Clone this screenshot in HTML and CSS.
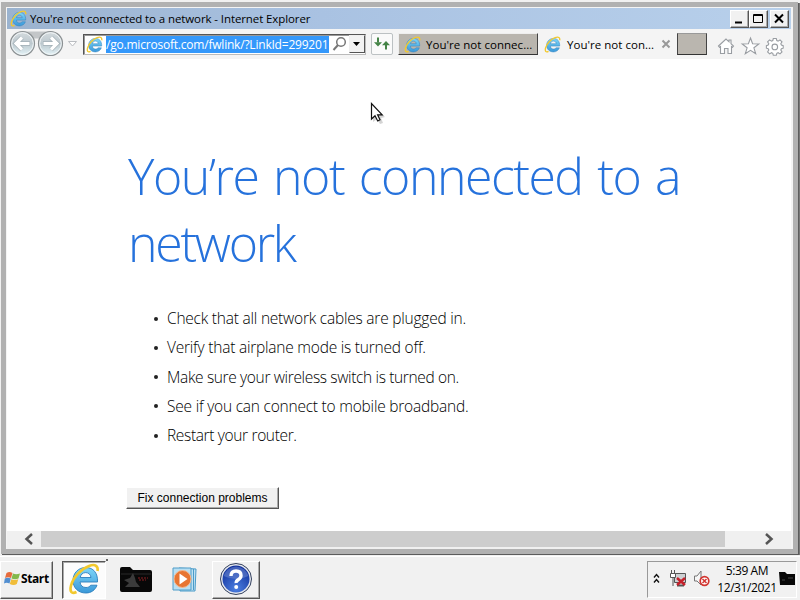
FILE: index.html
```html
<!DOCTYPE html>
<html lang="en">
<head>
<meta charset="utf-8">
<title>You're not connected to a network</title>
<link rel="stylesheet" href="styles.css">
</head>
<body>
<svg class="defs" width="0" height="0" aria-hidden="true">
  <defs>
    <linearGradient id="eg" x1="0" y1="0" x2="0" y2="1"><stop offset="0" stop-color="#7ed6f8"/><stop offset="1" stop-color="#3a98d8"/></linearGradient>
    <linearGradient id="ng" x1="0" y1="0" x2="0" y2="1"><stop offset="0" stop-color="#d5dbde"/><stop offset=".5" stop-color="#bcc8ce"/><stop offset="1" stop-color="#e4f4f8"/></linearGradient>
    <radialGradient id="hg" cx=".5" cy=".85" r=".8"><stop offset="0" stop-color="#4c7fe0"/><stop offset="1" stop-color="#10309c"/></radialGradient>
    <symbol id="ie" viewBox="0 0 32 32">
      <path d="M29.500 19H12C12.500 22.700 14.500 24.500 18 24.500C20.200 24.500 21.700 23.700 22.700 22.200H29C27.200 27.200 23 30 17.800 30C10.400 30 5 25 5 17.500C5 10 10.400 4.500 17.800 4.500C25.300 4.500 30 10 29.500 19ZM12.200 14.500H23C22.600 11.500 20.700 9.600 17.700 9.600C14.600 9.600 12.800 11.500 12.200 14.500Z" fill="url(#eg)" stroke="#2b7fbd" stroke-width=".9"/>
      <path d="M29.500 8C30.500 3.500 27.500 .5 21 3C13 6 5 14.500 3 22.500C1.500 28.500 3.500 31.500 8.500 29" fill="none" stroke="#f2c92e" stroke-width="2.600"/>
    </symbol>
  </defs>
</svg>
<main class="window">
  <header class="titlebar">
    <svg class="ie-icon"><use href="#ie"/></svg>
    <h2 class="title">You're not connected to a network - Internet Explorer</h2>
    <div class="controls">
      <button aria-label="Minimize"><svg width="16" height="15"><path d="M4 11.500h7" stroke="#000" stroke-width="2"/></svg></button>
      <button aria-label="Maximize"><svg width="16" height="15"><path d="M3.500 3.500h9v8h-9zM3 4.500h10" fill="none" stroke="#000"/></svg></button>
      <button class="close" aria-label="Close"><svg width="16" height="15"><path d="M4 3.500l8 8M12 3.500l-8 8" stroke="#000" stroke-width="2"/></svg></button>
    </div>
  </header>
  <nav class="toolbar">
    <svg class="nav-buttons" width="72" height="30" viewBox="0 0 72 30">
      <path d="M15 2.500h28v7H15z" fill="#c3c6c8"/>
      <g stroke="#8c9193" stroke-width="1.200"><circle cx="15.500" cy="14.500" r="12" fill="url(#ng)"/><circle cx="43.500" cy="14.500" r="12" fill="url(#ng)"/></g>
      <g fill="none" stroke="#f2f6f7" stroke-width="1"><circle cx="15.500" cy="14.500" r="10.800"/><circle cx="43.500" cy="14.500" r="10.800"/></g>
      <path d="M23 14.500H9M15 8.500l-6 6 6 6M36 14.500h14M44 8.500l6 6-6 6" fill="none" stroke="#a3b0b6" stroke-width="4.600"/>
      <path d="M22.500 14.500H9M15 8.500l-6 6 6 6M36.500 14.500h14M44 8.500l6 6-6 6" fill="none" stroke="#fff" stroke-width="3.200"/>
      <path d="M61.500 12.500h8l-4 4.500z" fill="#fff" stroke="#babdc1"/>
    </svg>
    <div class="address">
      <svg class="ie-icon"><use href="#ie"/></svg>
      <span class="url">/go.microsoft.com/fwlink/?LinkId=299201</span>
      <svg class="search" width="17" height="18" viewBox="0 0 17 18"><circle cx="10" cy="7" r="4.300" fill="none" stroke="#777" stroke-width="1.500"/><path d="M7 10l-4.500 5" stroke="#777" stroke-width="2"/></svg>
      <button class="drop" aria-label="Show address list"><svg width="14" height="16"><path d="M3 6h7l-3.500 4z" fill="#000"/></svg></button>
    </div>
    <button class="refresh" aria-label="Refresh"><svg width="20" height="20" viewBox="0 0 20 20"><path d="M6 3.500v5M14 15.500v-5" fill="none" stroke="#458447" stroke-width="2"/><path d="M2 8.200h8l-4 4.300zM10 11.200h8l-4-4.300z" fill="#458447"/></svg></button>
    <div class="tab inactive"><svg class="ie-icon"><use href="#ie"/></svg><span>You're not connec...</span></div>
    <div class="tab active"><svg class="ie-icon"><use href="#ie"/></svg><span>You're not con...</span><svg width="10" height="10"><path d="M1.500 1.500l7 7M8.500 1.500l-7 7" stroke="#999" stroke-width="2"/></svg></div>
    <button class="newtab" aria-label="New tab"></button>
    <svg class="tools" width="70" height="20" viewBox="0 0 70 20" fill="#fff" stroke="#999da2" stroke-width="1.100">
      <path d="M1.500 10l7.500-7 3 2.800V4h2v3.700l2.500 2.300-1 1.200-1-.7v7H11v-5H7.500v5h-4v-7l-1 .7z"/>
      <path d="M33.500 2l2.100 5.800 6.200.2-4.900 3.800 1.800 6-5.200-3.500-5.200 3.500 1.800-6-4.900-3.800 6.200-.2z"/>
      <path d="M56.300 2.500h3l.5 2 1.300.6 1.900-1.200 2 2-1.200 1.900.6 1.300 1.800.5v2.600l-1.800.5-.6 1.300 1.200 1.900-2 2-1.900-1.200-1.300.6-.5 2h-3l-.5-2-1.300-.6-1.900 1.200-2-2 1.200-1.900-.6-1.300-1.800-.5V9.600l1.800-.5.6-1.300-1.200-1.900 2-2 1.900 1.200 1.300-.6z"/><circle cx="57.800" cy="10.900" r="2.800"/>
    </svg>
  </nav>
  <section class="page">
    <h1><span class="l1">You’re not connected to a</span><br><span class="l2">network</span></h1>
    <ul>
      <li>Check that all network cables are plugged in.</li>
      <li>Verify that airplane mode is turned off.</li>
      <li class="tight">Make sure your wireless switch is turned on.</li>
      <li>See if you can connect to mobile broadband.</li>
      <li class="tight">Restart your router.</li>
    </ul>
    <button class="fix">Fix connection problems</button>
  </section>
  <div class="scrollbar">
    <svg width="34" height="16"><path d="M25 3L19.500 8l5.500 5" fill="none" stroke="#555" stroke-width="2.500"/></svg>
    <div class="thumb"></div>
    <svg class="right" width="14" height="16"><path d="M4 3l5.500 5L4 13" fill="none" stroke="#555" stroke-width="2.500"/></svg>
  </div>
</main>
<footer class="taskbar">
  <button class="start"><svg width="17" height="17" viewBox="0 0 17 17"><path d="M2.500 3q3-2 6 0L7 8q-3-1.500-6 0z" fill="#e66b3c"/><path d="M9 3.500q3 1.500 7 0L14.500 8.500q-3.500 1.500-7 0z" fill="#83b84b"/><path d="M.8 8.500q3-1.500 6 0L5.500 13.500q-3-1.500-5.500 0z" fill="#528ed0"/><path d="M7.300 9.200q3.500 1.500 7 0L12.800 14q-3 2-7 0z" fill="#f0bd39"/></svg><span>Start</span></button>
  <div class="task pressed"><svg width="32" height="34"><use href="#ie"/></svg></div>
  <i class="notch"></i>
  <svg class="folder" width="32" height="26" viewBox="0 0 32 26"><path d="M0 2q0-2 2-2h8l3 3h17q2 0 2 2v18q0 2-2 2H2q-2 0-2-2z" fill="#080808"/><path d="M1 7h30" stroke="#282828"/><path d="M13 6l2 5 1 4 4 5H5l4-4-5-3 6-2z" fill="#3a3a3a"/><path d="M18 11h10M19 13h7" stroke="#8d1e20" stroke-width="1.200" stroke-dasharray="2 1"/></svg>
  <svg class="media" width="28" height="28" viewBox="0 0 28 28"><path d="M7 2l17 1-1 22H8z" fill="#bfe1f2" stroke="#4a9bc9"/><path d="M21.500 3v21" stroke="#4a9bc9"/><path d="M1 2h18v22H1z" fill="#b9dff2" stroke="#4e9dc9"/><circle cx="10.500" cy="13" r="8.500" fill="#e77532" stroke="#f4b68c"/><path d="M7.500 7.500v11l8-5.500z" fill="#fff"/></svg>
  <div class="task raised"><svg width="34" height="34" viewBox="0 0 34 34"><circle cx="17" cy="17" r="15.500" fill="#e6e9ef" stroke="#34415f"/><circle cx="17" cy="17" r="13.500" fill="url(#hg)"/><path d="M4.500 14a13 13 0 0 1 25 0q-12 6-25 0z" fill="#6d89cf" opacity=".55"/><path d="M12 14q0-5 5-5t5 4.500q0 2.500-2.500 4T17.200 21" fill="none" stroke="#fff" stroke-width="3.400"/><circle cx="17.200" cy="25" r="2" fill="#fff"/></svg></div>
  <aside class="tray">
    <svg class="chev" width="8" height="11"><path d="M1 4.500l2.500-3 2.500 3M1 9.500l2.500-3 2.500 3" fill="none" stroke="#111" stroke-width="1.400"/></svg>
    <svg class="net" width="18" height="18" viewBox="0 0 18 18"><path d="M5.500 3.500h11v9h-11z" fill="#ccd0d2" stroke="#555"/><path d="M8 15.500h7" stroke="#555" stroke-width="2"/><path d="M2.500 0v3M5.500 0v3M1.500 3.500h5v4h-5zM4 8v8" fill="#fff" stroke="#555"/><path d="M8 8l8 7M16 8l-8 7" stroke="#c5202a" stroke-width="2.500"/></svg>
    <svg class="vol" width="18" height="18" viewBox="0 0 18 18"><path d="M1.500 6h2.500l4-5v14l-4-4h-2.500z" fill="#f6f6f6" stroke="#777"/><circle cx="11.500" cy="11" r="4.300" fill="#fff" stroke="#d23530" stroke-width="1.700"/><path d="M9.500 9l4 4M13.500 9l-4 4" stroke="#d23530" stroke-width="1.500"/></svg>
    <div class="clock"><span class="time">5:39 AM</span><span class="date">12/31/2021</span></div>
    <svg class="mini" width="16" height="13"><path d="M0 0h6l2 2h8v11H1z" fill="#080808"/><path d="M3 8h3M9 6h5" stroke="#444"/></svg>
  </aside>
</footer>
<svg class="cursor" width="16" height="24" viewBox="0 0 16 24"><path d="M3 4v16l4-3 3 5 3-1-2-5 4-1z" fill="#aaa" opacity=".5"/><path d="M1.500 1.500v15.500l3.500-3.300 2.700 5.300 2.300-1.200-2.400-5h4.600z" fill="#fff" stroke="#111" stroke-width="1.200"/></svg>
</body>
</html>
```
FILE: styles.css
```css
* { box-sizing: border-box; }
body { margin: 0; padding-top: 2px; width: 800px; height: 600px; overflow: hidden; background: #f1f1f1; color: #000; font: 12px "Open Sans", "Noto Sans", sans-serif; }
button { padding: 0; font: inherit; color: inherit; }
svg { display: block; flex: none; }
.defs { position: absolute; }
.ie-icon { width: 17px; height: 17px; }
.window { height: 552px; width: 797px; margin: 0 0 2px 1px; border: 5px solid #b1b1b1; padding: 1px 2px 0 1px; display: flex; flex-direction: column; background: #f4f4f4; box-shadow: 1px 1px #5c5c5c, 2px 1px #777; }
.titlebar { height: 21px; flex: none; display: flex; align-items: center; background: linear-gradient(90deg, #9bb3cf, #a9c2e2 40%, #b8d0eb); padding: 0 0 0 3px; }
.title { margin: 0 auto 0 3px; font-size: 11.500px; font-weight: 400; letter-spacing: -.1px; line-height: 20px; white-space: nowrap; }
.controls { display: flex; }
.controls button { width: 19px; height: 18px; border: 1px solid; border-color: #fff #555 #555 #fff; background: #f1f1f1; box-shadow: inset -1px -1px #aaa; }
.controls .close { margin: 0 2px; }
.toolbar { height: 30px; flex: none; display: flex; align-items: center; background: #f4f4f4; }
.nav-buttons { margin-right: 4px; }
.address { width: 283px; height: 21px; border: 1px solid; border-color: #555 #bbb #bbb #555; box-shadow: inset 1px 1px #999; background: #fff; display: flex; align-items: center; padding-left: 2px; }
.url { width: 223px; height: 17px; margin-left: 3px; background: #3498fb; color: #fff; font-size: 12px; letter-spacing: -.21px; line-height: 17px; white-space: nowrap; overflow: hidden; }
.search { margin-left: 2px; }
.drop { width: 16px; height: 18px; margin-left: auto; border: 1px solid; border-color: #eee #555 #555 #eee; background: #f2f2f2; }
.refresh { width: 22px; height: 22px; margin-left: 5px; border: 1px solid #bcc1c3; border-radius: 2px; background: #fafafa; }
.tab { display: flex; align-items: center; height: 22px; white-space: nowrap; }
.tab span { font-size: 11.500px; letter-spacing: .03px; }
.inactive { width: 140px; margin-left: 5px; padding-left: 5px; gap: 5px; background: #b9b5ae; border: 1px solid; border-color: #eee #444 #333 #eee; }
.active { width: 133px; margin-left: 6px; gap: 6px; }
.active span { width: 88px; }
.newtab { width: 30px; height: 22px; background: #bab6af; border: 1px solid; border-color: #999 #444 #333 #444; }
.tools { margin: 4px 0 0 10px; }
.page { flex: 1; min-height: 0; background: #fff; padding: 84px 0 0 121px; }
h1 { margin: 0; height: 134px; font-size: 50px; font-weight: 300; line-height: 67px; color: #2672dc; white-space: nowrap; }
.l1 { letter-spacing: -1.500px; word-spacing: 3.200px; }
.l2 { letter-spacing: -2.300px; }
ul { list-style: none; margin: 27px 0 0 24px; padding: 0; font-size: 15.500px; font-weight: 300; letter-spacing: -.22px; line-height: 29.250px; white-space: nowrap; }
li { display: flex; align-items: center; gap: 9px; }
.tight { letter-spacing: -.35px; }
li::before { content: ""; width: 4px; height: 4px; margin-left: 2px; border-radius: 50%; background: #222; }
.fix { display: block; width: 153px; height: 22px; margin: 37px 0 0 -2px; font: 12px "Liberation Sans", sans-serif; background: #f1f1f1; border: 1px solid; border-color: #fff #555 #555 #fff; box-shadow: inset -1px -1px #aaa; }
.scrollbar { height: 18px; flex: none; display: flex; padding-bottom: 2px; align-items: stretch; background: #f0f0f0; }
.thumb { width: 684px; background: #cdcdcd; }
.right { margin-left: 37px; }
.taskbar { height: 44px; display: flex; align-items: center; background: #f1f1f1; border-top: 1px solid #fff; padding-top: 2px; }
.start { width: 53px; height: 38px; display: flex; align-items: center; padding: 0 0 2px 3px; font-weight: 700; font-size: 12px; letter-spacing: -.4px; border: 1px solid; border-color: #fff #555 #555 #fff; background: #f1f1f1; box-shadow: inset -1px -1px #aaa; }
.task { height: 38px; display: flex; align-items: center; justify-content: center; }
.pressed { width: 44px; margin-left: 9px; background: #fcfcfc; border: 1px solid; border-color: #555 #fff #fff #555; box-shadow: inset 1px 1px #aaa; padding: 0 0 2px; }
.notch { width: 2px; height: 2px; background: #666; align-self: flex-start; }
.folder { margin-left: 12px; }
.media { margin-left: 20px; }
.raised { width: 48px; margin-left: 12px; padding-bottom: 2px; border: 1px solid; border-color: #fff #555 #555 #fff; box-shadow: inset -1px -1px #aaa; }
.tray { width: 150px; height: 37px; margin: 0 3px 0 auto; border: 1px solid; border-color: #999 #fff #fff #999; display: flex; align-items: center; padding-bottom: 2px; }
.chev { margin-left: 5px; }
.net { margin-left: 8px; }
.vol { margin-left: 6px; }
.clock { width: 60px; margin-left: 6px; font-size: 12px; line-height: 17px; text-align: center; letter-spacing: -.42px; white-space: nowrap; }
.clock span { display: block; }
.mini { margin-left: 2px; }
.cursor { position: absolute; left: 370px; top: 102px; }
```
